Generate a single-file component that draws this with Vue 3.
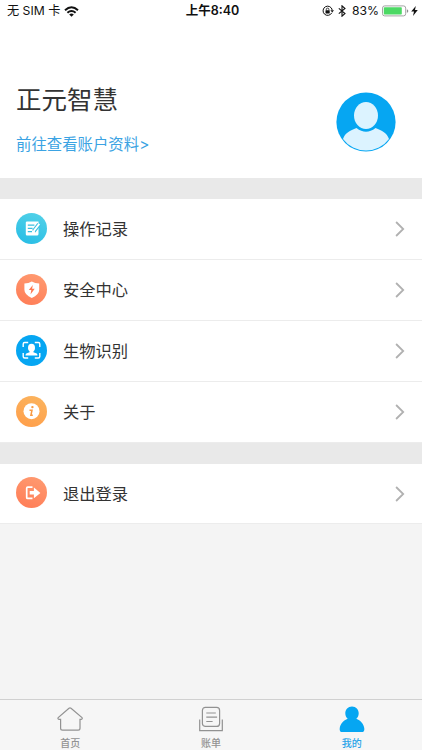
<script setup>
const groups = [
  [
    { label: '操作记录', icon: 'record' },
    { label: '安全中心', icon: 'shield' },
    { label: '生物识别', icon: 'face' },
    { label: '关于', icon: 'about' },
  ],
  [{ label: '退出登录', icon: 'exit' }],
]
const tabs = [
  { label: '首页', icon: 'home' },
  { label: '账单', icon: 'bill' },
  { label: '我的', icon: 'me', active: true },
]
</script>

<template>
  <div class="screen">
    <header class="status">
      <div class="carrier">
        <span>无 SIM 卡</span>
        <svg class="wifi" width="15" height="11" viewBox="0 0 15 11">
          <g fill="none" stroke="#111" stroke-width="2">
            <path d="M1 4.2Q7.5-1.6 14 4.2" />
            <path d="M3.4 6.8Q7.5 3.3 11.6 6.8" />
          </g>
          <path d="M5.2 8.4Q7.5 6.8 9.8 8.4L7.5 10.8Z" fill="#111" />
        </svg>
      </div>
      <div class="time">上午8:40</div>
      <div class="power">
        <svg class="lock" width="12" height="12" viewBox="0 0 12 12">
          <path d="M9.8 7.8A4.6 4.6 0 1 1 10.2 5" fill="none" stroke="#111" stroke-width="1" />
          <path d="M8.4 5.2H12L10.2 7.6Z" fill="#111" />
          <rect x="3.5" y="5.3" width="4.2" height="3.1" rx=".4" fill="#111" />
          <path d="M4.3 5.4V4.4a1.3 1.3 0 0 1 2.6 0v1" fill="none" stroke="#111" stroke-width=".8" />
        </svg>
        <svg class="bluetooth" width="8" height="12" viewBox="0 0 8 12">
          <path d="M.8 3.3L7 8.5 4 11.2V.8L7 3.5.8 8.7" fill="none" stroke="#111" stroke-width="1.1" />
        </svg>
        <span class="percent">83%</span>
        <svg class="battery" width="27" height="12" viewBox="0 0 27 12">
          <rect x=".5" y=".9" width="23.2" height="10" rx="2.2" fill="#fff" stroke="#8d8d8d" stroke-width=".8" />
          <rect x="1.8" y="2.2" width="18" height="7.4" rx=".8" fill="#4cd964" />
          <path d="M24.9 4.2q1.4.4 1.4 1.8t-1.4 1.8Z" fill="#8d8d8d" />
        </svg>
        <svg class="bolt" width="7" height="10" viewBox="0 0 7 10">
          <path d="M4.8 0L.2 5.6H3L2 10 6.8 4.1H4Z" fill="#111" />
        </svg>
      </div>
    </header>

    <section class="profile">
      <div>
        <h1>正元智慧</h1>
        <a class="link">前往查看账户资料&gt;</a>
      </div>
      <svg class="avatar" width="60" height="60" viewBox="0 0 60 60">
        <circle cx="30" cy="30" r="29.6" fill="#06a6f2" />
        <path d="M7 47C9 41 14 38.6 20.500 36Q30 43.5 39.500 36C46 38.6 51 41 53 47A28.6 28.6 0 0 1 7 47Z" fill="#dcf3ff" />
        <ellipse cx="30" cy="23.5" rx="12" ry="13.5" fill="#dcf3ff" />
      </svg>
    </section>

    <main>
      <ul v-for="(rows, i) in groups" :key="i" class="group">
        <li v-for="row in rows" :key="row.label" class="row">
          <span class="badge" :class="row.icon">
            <svg width="31" height="31" viewBox="0 0 31 31">
              <template v-if="row.icon === 'record'">
                <path d="M11 8.5h11.5V21q0 1.5-1.5 1.5H11q-1.2 0-1.2-1.2V9.7q0-1.2 1.2-1.2Z" fill="#fff" />
                <path d="M11.8 12.2h6.6M11.8 15.4h4.8M11.8 18.6h4.2" stroke="#39bfe0" stroke-width="1.2" />
                <path d="M23 11.2l-5.3 7" stroke="#39bfe0" stroke-width="4" />
                <path d="M23.3 10.8l-5.1 6.7-.5 1.8" fill="none" stroke="#fff" stroke-width="1.9" />
              </template>
              <template v-else-if="row.icon === 'shield'">
                <path d="M15.8 7.6q3.2 2 7.4 2v6.2q0 5-7.4 8.2-7.4-3.2-7.4-8.2V9.6q4.2 0 7.4-2Z" fill="#fff" />
                <path d="M16.8 11l-4 5.1h2.5l-.8 4.4 4.2-5.7h-2.6Z" fill="#ff7952" />
              </template>
              <template v-else-if="row.icon === 'face'">
                <path d="M7.2 12V9q0-1.5 1.5-1.500h3.500M18.8 7.500h3.500q1.5 0 1.5 1.5v3M23.8 18V21.5q0 1.500-1.500 1.500h-3.500M12.200 23h-3.500q-1.500 0-1.500-1.500v-3.500" fill="none" stroke="#fff" stroke-width="1.4" />
                <ellipse cx="15.5" cy="12.7" rx="3.5" ry="4" fill="#fff" />
                <path d="M13.6 15h3.8v2.200l3.300 1.200q.8.4.8 2.100H9.500q0-1.700.8-2.100l3.300-1.200Z" fill="#fff" />
              </template>
              <template v-else-if="row.icon === 'about'">
                <circle cx="15.5" cy="15.2" r="8" fill="#fff" />
                <circle cx="16.4" cy="11.1" r="1.2" fill="#f99a42" />
                <path d="M13.5 14.2h2.500l-1.100 5.100h1.900" fill="none" stroke="#f99a42" stroke-width="1.5" />
              </template>
              <template v-else>
                <path d="M16.5 10.2h-4.8q-1 0-1 1v9.2q0 1 1 1h4.8" fill="none" stroke="#fff" stroke-width="1.7" />
                <path d="M13.7 14.1h4.2v-3.6l6.5 5.4-6.5 5.4v-3.7h-4.2Z" fill="#fff" />
              </template>
            </svg>
          </span>
          <span class="label">{{ row.label }}</span>
          <svg class="arrow" width="10" height="16" viewBox="0 0 10 16">
            <path d="M1.1 1L8.2 8 1.1 15" fill="none" stroke="#b1b1b1" stroke-width="1.8" />
          </svg>
        </li>
      </ul>
    </main>

    <nav class="tabs">
      <div v-for="tab in tabs" :key="tab.label" class="tab" :class="{ active: tab.active }">
        <svg width="28" height="28" viewBox="0 0 28 28">
          <path v-if="tab.icon === 'home'" d="M13 2.2q1-.8 2 0L26 11.6q.8 1.4-.8 1.7H24v9q0 1.9-1.900 1.900H6.500q-1.900 0-1.900-1.900v-9H3q-1.600-.3-.8-1.700Z" fill="none" stroke="#929292" stroke-width="1.2" />
          <g v-else-if="tab.icon === 'bill'" fill="none" stroke="#929292" stroke-width="1.2">
            <rect x="5.4" y="1.4" width="17.2" height="19" rx="3" />
            <path d="M9.3 7h9.5M9.3 11.200h10.800M9.3 15.500h6.300M2.7 13.500v11.200h22.600V13.500" />
          </g>
          <path v-else d="M14 .4c4 0 6.7 3 6.7 6.8 0 2.5-1 4.4-2.4 5.6 4.1 1.700 7.500 5 8 9.600.3 2.500-.7 3.600-2.500 3.600H4.200c-1.800 0-2.800-1.100-2.500-3.600.5-4.600 3.900-7.900 8-9.600-1.400-1.200-2.400-3.100-2.400-5.600C7.300 3.400 10 .4 14 .4Z" fill="#06a6f2" />
        </svg>
        <span>{{ tab.label }}</span>
      </div>
    </nav>
  </div>
</template>

<style>
body {
  margin: 0;
}
</style>

<style scoped>
.screen {
  width: 422px;
  height: 750px;
  display: flex;
  flex-direction: column;
  overflow: hidden;
  background: #f4f4f4;
  color: #333;
  font-family: Inter, "Noto Sans CJK SC", sans-serif;
}
.status {
  height: 22px;
  display: grid;
  grid-template-columns: 1fr auto 1fr;
  align-items: center;
  padding: 0 4px 0 7px;
  background: #fff;
  color: #111;
  font-size: 12.2px;
  line-height: 22px;
}
.carrier,
.power {
  display: flex;
  align-items: center;
}
.wifi {
  margin-left: 4px;
}
.time {
  font-weight: 600;
  font-size: 12.5px;
}
.power {
  justify-content: flex-end;
}
.bluetooth {
  margin: 0 6px 0 4px;
}
.battery {
  margin: 0 2px 0 3px;
}
.profile {
  height: 156px;
  box-sizing: border-box;
  display: flex;
  justify-content: space-between;
  align-items: flex-start;
  padding: 59px 26px 0 16px;
  background: #fff;
}
h1 {
  margin: 0;
  font-size: 25.5px;
  line-height: 38px;
  font-weight: 400;
}
.link {
  display: block;
  margin-top: 14px;
  font-size: 15.4px;
  line-height: 24px;
  color: #3ba3e3;
}
.avatar {
  margin-top: 11px;
}
.group {
  margin: 0;
  padding: 0;
  list-style: none;
  border-top: 21px solid #e9e9e9;
}
.row {
  height: 61px;
  box-sizing: border-box;
  display: flex;
  align-items: center;
  padding: 0 17px 0 16px;
  background: #fff;
  border-bottom: 1px solid #ececec;
}
.group:last-child .row {
  height: 60px;
}
.badge {
  width: 31px;
  height: 31px;
  margin-bottom: 2px;
  border-radius: 50%;
}
.badge svg {
  display: block;
}
.record {
  background: linear-gradient(20deg, #25bce5, #55d2e8);
}
.shield,
.exit {
  background: linear-gradient(20deg, #ff7b55, #ff9c72);
}
.face {
  background: #06a6f2;
}
.about {
  background: linear-gradient(20deg, #ff9d49, #fbb55f);
}
.label {
  flex: 1;
  margin-left: 16px;
  font-size: 16.3px;
  line-height: 24px;
}
.tabs {
  height: 51px;
  box-sizing: border-box;
  margin-top: auto;
  display: grid;
  grid-template-columns: repeat(3, 1fr);
  background: #f6f6f6;
  border-top: 1px solid #d0d0d0;
}
.tab {
  display: flex;
  flex-direction: column;
  align-items: center;
  padding-top: 6px;
  font-size: 10px;
  line-height: 14px;
  font-weight: 500;
  color: #929292;
}
.tab span {
  margin-top: 2px;
}
.active {
  color: #2aa4e8;
}
</style>
